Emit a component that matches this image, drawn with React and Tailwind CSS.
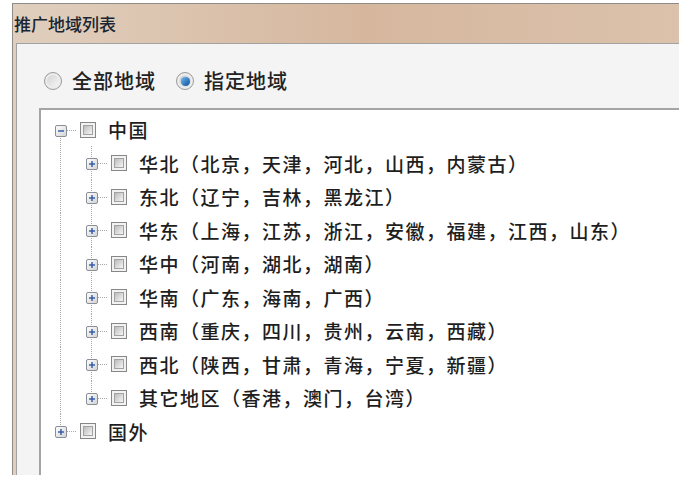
const regions = [
  '华北（北京，天津，河北，山西，内蒙古）',
  '东北（辽宁，吉林，黑龙江）',
  '华东（上海，江苏，浙江，安徽，福建，江西，山东）',
  '华中（河南，湖北，湖南）',
  '华南（广东，海南，广西）',
  '西南（重庆，四川，贵州，云南，西藏）',
  '西北（陕西，甘肃，青海，宁夏，新疆）',
  '其它地区（香港，澳门，台湾）',
]

const rows = [
  { label: '中国', guides: [], up: false, down: true, open: true },
  ...regions.map((label, i) => ({
    label,
    guides: [true],
    up: true,
    down: i < regions.length - 1,
    open: false,
  })),
  { label: '国外', guides: [], up: true, down: false, open: false },
]

export default function App() {
  return (
    <div lang="zh-CN" className="w-[679px] h-[484px] bg-white overflow-hidden font-['Noto_Sans_CJK_SC','Noto_Sans',sans-serif]">
      <div className="ml-[12px] mt-[3px] h-[472px] w-[700px] flex flex-col border-l border-t border-[#8f8b87] bg-gradient-to-r from-[#e0cfbe] via-[#d6b79e] to-[#dcc3ad]">
        {/* title bar */}
        <div className="h-[39px] flex items-center pl-[1px] text-[17px] font-medium text-[#1b2632] leading-none">
          推广地域列表
        </div>

        {/* panel */}
        <div className="flex-1 ml-[3px] border-l border-t border-[#a2a2a2] bg-[#f4f4f4] pt-[27px] pl-[27px] flex flex-col">
          <div className="h-[20px] flex items-center text-[20px] tracking-[1px] font-medium text-[#222] leading-none">
            <Radio />
            <span className="ml-[10px]">全部地域</span>
            <span className="ml-[20px]"><Radio checked /></span>
            <span className="ml-[10px]">指定地域</span>
          </div>

          {/* tree */}
          <div className="flex-1 mt-[17px] -ml-[5px] border-l-2 border-t-2 border-[#a4a4a4] bg-white pt-[3px] pl-[4px]">
            {rows.map((row, i) => (
              <TreeRow key={i} {...row} />
            ))}
          </div>
        </div>
      </div>
    </div>
  )
}

function Radio({ checked }) {
  return (
    <span className="w-[18px] h-[18px] rounded-full border border-[#9a9a9a] bg-gradient-to-br from-[#cfcfcf] to-[#fbfbfb] flex items-center justify-center shadow-[inset_0_0_0_2px_#ededed]">
      {checked && (
        <span className="w-[9px] h-[9px] rounded-full bg-gradient-to-br from-[#6cbaf2] to-[#0c4f96] shadow-[0_0_1px_#1d5fa4]" />
      )}
    </span>
  )
}

function TreeRow({ label, guides, up, down, open }) {
  return (
    <div className="h-[33.5px] flex items-center">
      {guides.map((g, i) => (
        <Guide key={i} on={g} />
      ))}
      <Expander up={up} down={down} open={open} />
      <Checkbox />
      <span className="ml-[12px] text-[19px] tracking-[1.5px] font-medium text-[#1e1e1e] leading-none whitespace-nowrap">
        {label}
      </span>
    </div>
  )
}

function Guide({ on }) {
  return (
    <svg width="31" height="34" className="shrink-0 overflow-visible">
      {on && <line x1="15.5" y1="0" x2="15.5" y2="34" stroke="#a8a8a8" strokeDasharray="1 1" />}
    </svg>
  )
}

function Expander({ up, down, open }) {
  return (
    <svg width="31" height="34" className="shrink-0 overflow-visible">
      <defs>
        <linearGradient id="exp" x1="0" y1="0" x2="1" y2="1">
          <stop offset="0" stopColor="#ffffff" />
          <stop offset="1" stopColor="#d2d2d2" />
        </linearGradient>
      </defs>
      {up && <line x1="15.5" y1="0" x2="15.5" y2="12" stroke="#a8a8a8" strokeDasharray="1 1" />}
      {down && <line x1="15.5" y1="23" x2="15.5" y2="34" stroke="#a8a8a8" strokeDasharray="1 1" />}
      <line x1="22" y1="17.5" x2="31" y2="17.5" stroke="#a8a8a8" strokeDasharray="1 1" />
      <rect x="10.5" y="12.5" width="11" height="11" rx="1.5" fill="url(#exp)" stroke="#8a8e96" />
      <line x1="13" y1="18" x2="19" y2="18" stroke="#2e56a8" strokeWidth="1.4" />
      {!open && <line x1="16" y1="15" x2="16" y2="21" stroke="#2e56a8" strokeWidth="1.4" />}
    </svg>
  )
}

function Checkbox() {
  return (
    <span className="ml-[4px] w-[16px] h-[16px] shrink-0 border border-[#878787] bg-[#f2f2f2] p-[2px] flex">
      <span className="flex-1 border border-[#a2a2a2] bg-gradient-to-br from-[#bcbcbc] to-[#f6f6f6]" />
    </span>
  )
}
